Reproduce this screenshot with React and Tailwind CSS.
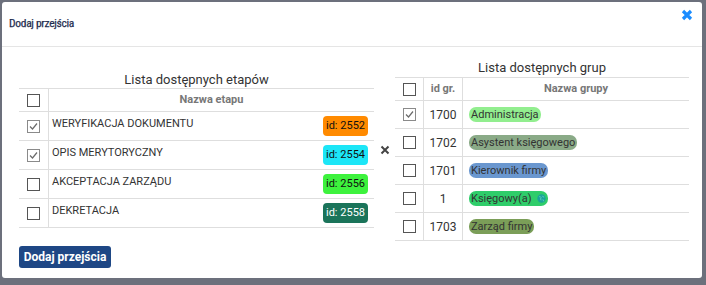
import React from 'react';

const stages = [
  { name: 'WERYFIKACJA DOKUMENTU', id: 2552, checked: true, badge: 'bg-[#ff8a00] text-[#111]' },
  { name: 'OPIS MERYTORYCZNY', id: 2554, checked: true, badge: 'bg-[#1ce6f7] text-[#111]' },
  { name: 'AKCEPTACJA ZARZĄDU', id: 2556, checked: false, badge: 'bg-[#3df23d] text-[#111]' },
  { name: 'DEKRETACJA', id: 2558, checked: false, badge: 'bg-[#1b745a] text-white' },
];

const groups = [
  { id: 1700, name: 'Administracja', checked: true, badge: 'bg-[#92ee8f]' },
  { id: 1702, name: 'Asystent księgowego', checked: false, badge: 'bg-[#8aaa87]' },
  { id: 1701, name: 'Kierownik firmy', checked: false, badge: 'bg-[#6a97cf]' },
  { id: 1, name: 'Księgowy(a)', checked: false, badge: 'bg-[#2fcd6a]', icon: true },
  { id: 1703, name: 'Zarząd firmy', checked: false, badge: 'bg-[#7b9e58]' },
];

function Checkbox({ checked }) {
  return (
    <span
      className={`flex h-[13px] w-[13px] items-center justify-center border bg-white ${
        checked ? 'border-[#8a8a8a]' : 'border-[#555]'
      }`}
    >
      {checked && (
        <svg width="11" height="11" viewBox="0 0 11 11">
          <path d="M2 5.5 L4.5 8 L9 2.5" fill="none" stroke="#6b6b6b" strokeWidth="1.2" />
        </svg>
      )}
    </span>
  );
}

function GlobeIcon() {
  return (
    <svg width="9" height="9" viewBox="0 0 10 10" className="ml-[5px]">
      <circle cx="5" cy="5" r="4.6" fill="#1aa39a" />
      <path d="M2.5 3 Q4 2.5 4.5 4 Q3.5 5.5 4.5 7 M6 2 Q7 4 8 3.5 M6.5 6 Q7.5 6.5 7 8" fill="none" stroke="#6fd6c4" strokeWidth="0.9" />
    </svg>
  );
}

function StageTable() {
  return (
    <div className="w-[355px]">
      <div className="h-[17px] text-center text-[13px] leading-[17px] text-[#333]">Lista dostępnych etapów</div>
      <div className="border-t border-[#dedede]">
        <div className="flex h-[23px] border-b border-[#dedede]">
          <div className="flex w-[30px] items-center justify-center border-r border-[#dedede]">
            <Checkbox />
          </div>
          <div className="flex flex-1 items-center justify-center text-[11px] font-bold text-[#777]">Nazwa etapu</div>
        </div>
        {stages.map((s) => (
          <div key={s.id} className="flex h-[29px] border-b border-[#dedede]">
            <div className="flex w-[30px] items-center justify-center border-r border-[#dedede]">
              <Checkbox checked={s.checked} />
            </div>
            <div className="flex flex-1 items-center justify-between pl-[3px] pr-[6px]">
              <span className="self-start pt-[5px] text-[11px] leading-[13px] text-[#333]">{s.name}</span>
              <span className={`rounded-[4px] px-[3px] text-[11px] leading-[20px] ${s.badge}`}>id: {s.id}</span>
            </div>
          </div>
        ))}
      </div>
    </div>
  );
}

function GroupTable() {
  return (
    <div className="w-[294px]">
      <div className="h-[19px] text-center text-[13px] leading-[19px] text-[#333]">Lista dostępnych grup</div>
      <div className="border-t border-[#dedede]">
        <div className="flex h-[23px] border-b border-[#dedede] text-[11px] font-bold text-[#777]">
          <div className="flex w-[29px] items-center justify-center border-r border-[#dedede]">
            <Checkbox />
          </div>
          <div className="flex w-[39px] items-center justify-center border-r border-[#dedede]">id gr.</div>
          <div className="flex flex-1 items-center justify-center">Nazwa grupy</div>
        </div>
        {groups.map((g) => (
          <div key={g.id} className="flex h-[28px] border-b border-[#dedede]">
            <div className="flex w-[29px] items-center justify-center border-r border-[#dedede]">
              <Checkbox checked={g.checked} />
            </div>
            <div className="flex w-[39px] items-center justify-center border-r border-[#dedede] text-[12px] text-[#333]">
              {g.id}
            </div>
            <div className="flex flex-1 items-center pl-[6px]">
              <span className={`flex items-center rounded-[7px] px-[2px] text-[11px] leading-[15px] text-[#333] ${g.badge}`}>
                {g.name}
                {g.icon && <GlobeIcon />}
              </span>
            </div>
          </div>
        ))}
      </div>
    </div>
  );
}

export default function App() {
  return (
    <div className="h-[285px] w-[706px] bg-[#6c707c] p-[2px] font-['Roboto',sans-serif]">
      <div className="flex h-[276px] w-[700px] flex-col rounded-[3px] bg-white">
        <div className="relative flex h-[45px] items-center border-b border-[#e5e5e5] pl-[7px]">
          <span className="font-['Roboto_Condensed','Liberation_Sans_Narrow',sans-serif] text-[11.5px] tracking-[-0.3px] text-[#1f2d4f] [-webkit-text-stroke:0.25px_#1f2d4f]">
            Dodaj przejścia
          </span>
          <button className="absolute right-[9px] top-[7px]">
            <svg width="12" height="12" viewBox="0 0 12 12">
              <path d="M2 2 L10 10 M10 2 L2 10" stroke="#1a8cff" strokeWidth="3.2" />
            </svg>
          </button>
        </div>
        <div className="flex items-center pl-[17px] pt-[11px]">
          <StageTable />
          <div className="flex w-[21px] justify-center">
            <svg width="10" height="10" viewBox="0 0 10 10">
              <path d="M1.5 1.5 L8.5 8.5 M8.5 1.5 L1.5 8.5" stroke="#444" strokeWidth="2" />
            </svg>
          </div>
          <GroupTable />
        </div>
        <div className="mt-[3px] pl-[17px]">
          <button className="h-[22px] w-[92px] rounded-[3px] bg-[#1e4785] text-[12px] font-bold text-white">
            Dodaj przejścia
          </button>
        </div>
      </div>
    </div>
  );
}
